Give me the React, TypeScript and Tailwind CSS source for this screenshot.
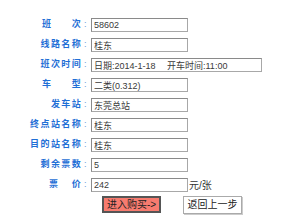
const rows: { label: string[]; value: string; wide?: boolean; unit?: string; narrow?: boolean }[] = [
  { label: ['班', '次'], value: '58602' },
  { label: ['线路名称'], value: '桂东' },
  { label: ['班次时间'], value: '日期:2014-1-18　 开车时间:11:00', wide: true },
  { label: ['车', '型'], value: '二类(0.312)' },
  { label: ['发车站'], value: '东莞总站' },
  { label: ['终点站名称'], value: '桂东' },
  { label: ['目的站名称'], value: '桂东' },
  { label: ['剩余票数'], value: '5' },
  { label: ['票', '价'], value: '242', unit: '元/张', narrow: true },
];

const font = { fontFamily: '"Liberation Sans", "Noto Sans CJK SC", sans-serif' };

function Label({ parts, narrow }: { parts: string[]; narrow?: boolean }) {
  return (
    <div className="flex items-center justify-end pr-[3px] text-[9px] font-bold text-[#1f6fd6] tracking-[1.4px]">
      {parts.length === 2 ? (
        <span className={`flex ${narrow ? 'w-[33px]' : 'w-[40px]'} justify-between`}>
          <span>{parts[0]}</span>
          <span>{parts[1]}</span>
        </span>
      ) : (
        <span>{parts[0]}</span>
      )}
      <span className="ml-[2px] font-normal text-[#6a9ad8]">:</span>
    </div>
  );
}

export default function App() {
  return (
    <div className="w-[293px] h-[223px] bg-white pt-[15px]" style={font}>
      <div className="grid grid-cols-[91px_1fr]">
        {rows.map((r, i) => (
          <div key={i} className="contents">
            <Label parts={r.label} narrow={r.narrow} />
            <div className="flex h-[20px] items-center">
              <input
                readOnly
                defaultValue={r.value}
                className={`h-[14px] ${r.wide ? 'w-[171px]' : 'w-[97px]'} border border-[#a8a8a8] border-t-[#8a8a8a] border-l-[#8a8a8a] bg-white px-[2px] text-[9px] text-[#3a3a3a] outline-none`}
                style={font}
              />
              {r.unit && <span className="ml-[1px] text-[10px] text-[#333]">{r.unit}</span>}
            </div>
          </div>
        ))}
      </div>
      <div className="mt-[1px] flex gap-[22px] pl-[102px]">
        <button className="h-[17px] w-[59px] border-2 border-[#555] bg-[#f77b6f] text-[10px] leading-none text-[#222]">
          进入购买-&gt;
        </button>
        <button className="h-[18px] w-[59px] border border-[#aaa] bg-white text-[10px] leading-none text-[#222] shadow-[1px_1px_0_#ccc]">
          返回上一步
        </button>
      </div>
    </div>
  );
}
